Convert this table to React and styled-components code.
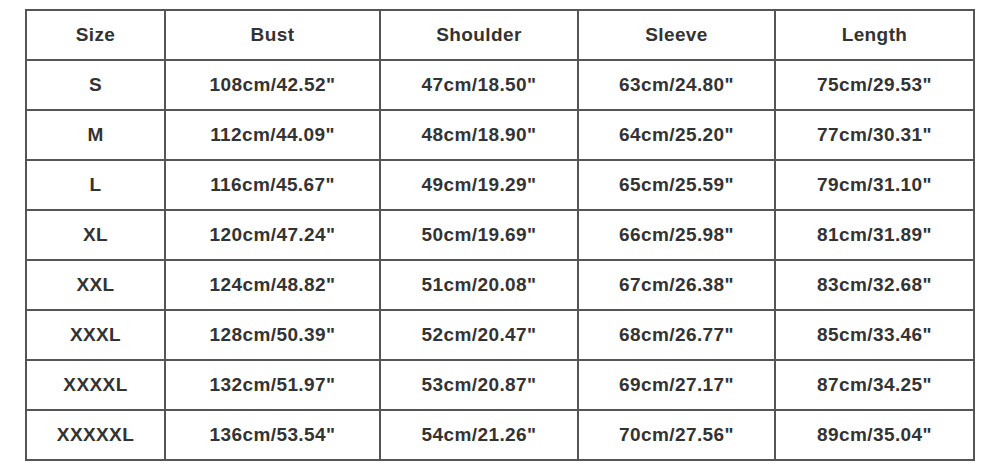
import React from 'react';
import styled, { createGlobalStyle } from 'styled-components';

const columns = ['Size', 'Bust', 'Shoulder', 'Sleeve', 'Length'];
const widths = [139, 215, 198, 197, 199];

const rows = [
    ['S', '108cm/42.52"', '47cm/18.50"', '63cm/24.80"', '75cm/29.53"'],
    ['M', '112cm/44.09"', '48cm/18.90"', '64cm/25.20"', '77cm/30.31"'],
    ['L', '116cm/45.67"', '49cm/19.29"', '65cm/25.59"', '79cm/31.10"'],
    ['XL', '120cm/47.24"', '50cm/19.69"', '66cm/25.98"', '81cm/31.89"'],
    ['XXL', '124cm/48.82"', '51cm/20.08"', '67cm/26.38"', '83cm/32.68"'],
    ['XXXL', '128cm/50.39"', '52cm/20.47"', '68cm/26.77"', '85cm/33.46"'],
    ['XXXXL', '132cm/51.97"', '53cm/20.87"', '69cm/27.17"', '87cm/34.25"'],
    ['XXXXXL', '136cm/53.54"', '54cm/21.26"', '70cm/27.56"', '89cm/35.04"'],
];

const App = () => {
    return (
        <Page>
            <GlobalStyle />
            <Table>
                <colgroup>
                    {widths.map((w, i) => <col key={i} style={{ width: w }} />)}
                </colgroup>
                <thead>
                    <tr>
                        {columns.map(c => <Cell as="th" key={c}>{c}</Cell>)}
                    </tr>
                </thead>
                <tbody>
                    {rows.map(r => (
                        <tr key={r[0]}>
                            {r.map((v, i) => <Cell key={i}>{v}</Cell>)}
                        </tr>
                    ))}
                </tbody>
            </Table>
        </Page>
    )
}

export default App;

const GlobalStyle = createGlobalStyle`
    html, body {
        margin: 0;
        padding: 0;
        background: #fff;
    }
`

const Page = styled.div`
    width: 1000px;
    height: 471px;
    padding: 9px 0 0 25px;
    box-sizing: border-box;
    background: #fff;
`

const Table = styled.table`
    border-collapse: collapse;
    table-layout: fixed;
    width: 950px;
    font-family: "Liberation Sans", Arial, sans-serif;
    font-weight: bold;
    color: #333;
`

const Cell = styled.td`
    border: 2px solid #555;
    height: 50px;
    padding: 0 0 1px;
    text-align: center;
    vertical-align: middle;
    font-size: 19px;
    font-weight: bold;
    letter-spacing: 0.4px;
    box-sizing: border-box;
`
